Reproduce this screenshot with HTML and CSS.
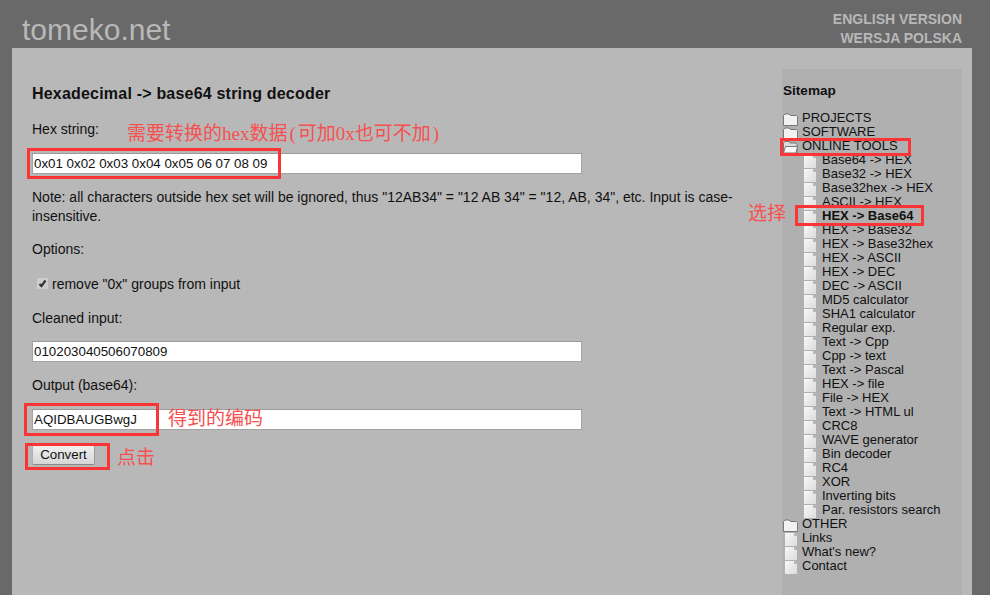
FILE: index.html
```html
<!DOCTYPE html>
<html lang="en">
<head>
    <meta charset="UTF-8">
    <meta name="viewport" content="width=device-width, initial-scale=1.0">
    <title>Hexadecimal -> base64 string decoder</title>
    <link rel="stylesheet" href="styles.css">
</head>
<body>
    <svg class="defs" width="0" height="0">
        <defs>
            <linearGradient id="paper" x1="0" y1="0" x2="1" y2="1">
                <stop offset="0" stop-color="#f8f8f8"/>
                <stop offset="1" stop-color="#dcdcdc"/>
            </linearGradient>
        </defs>
        <symbol id="folder" viewBox="0 0 15 13">
            <path d="M.5 12.500V2.500L2 1H6L7.500 2.500H13.500L14.500 3.500V12.500Z" fill="#f2f2f2" stroke="#777"/>
        </symbol>
        <symbol id="folder-open" viewBox="0 0 15 13">
            <path d="M.5 12V2L2 .5H6L7 2H13L14 3.500V12Z" fill="#dcdcdc" stroke="#777"/>
            <path d="M.5 12L2.500 5.500H14.500L13 12Z" fill="#fafafa" stroke="#777"/>
        </symbol>
        <symbol id="file" viewBox="0 0 12 13">
            <path d="M0 0H9L12 3V13H0Z" fill="url(#paper)"/>
            <path d="M9 0V3H12Z" fill="#b4b4b4"/>
        </symbol>
    </svg>

    <div class="header">
        <div class="logo">tomeko.net</div>
        <div class="lang">
            <a>ENGLISH VERSION</a>
            <a>WERSJA POLSKA</a>
        </div>
    </div>

    <div class="panel">
        <div class="content">
            <h1>Hexadecimal -&gt; base64 string decoder</h1>
            <p class="label">Hex string:</p>
            <input class="field" type="text" value="0x01 0x02 0x03 0x04 0x05 06 07 08 09">
            <p class="note">Note: all characters outside hex set will be ignored, thus "12AB34" = "12 AB 34" = "12, AB, 34", etc. Input is case-insensitive.</p>
            <p class="label options">Options:</p>
            <div class="check">
                <svg class="tick" viewBox="0 0 11 11">
                    <rect width="11" height="11" rx="1" fill="#cdcdcd"/>
                    <path d="M2.500 6L4.500 8L8.500 2.500" fill="none" stroke="#333" stroke-width="2.200"/>
                </svg>
                remove "0x" groups from input
            </div>
            <p class="label cleaned">Cleaned input:</p>
            <input class="field" type="text" value="010203040506070809">
            <p class="label output">Output (base64):</p>
            <input class="field" type="text" value="AQIDBAUGBwgJ">
            <button class="convert">Convert</button>
        </div>

        <div class="sitemap">
            <h2>Sitemap</h2>
            <ul class="tree">
                <li><svg class="ico-folder"><use href="#folder"/></svg>PROJECTS</li>
                <li><svg class="ico-folder"><use href="#folder"/></svg>SOFTWARE</li>
                <li><svg class="ico-folder"><use href="#folder-open"/></svg>ONLINE TOOLS</li>
                <li class="sub"><svg class="ico-file"><use href="#file"/></svg>Base64 -&gt; HEX</li>
                <li class="sub"><svg class="ico-file"><use href="#file"/></svg>Base32 -&gt; HEX</li>
                <li class="sub"><svg class="ico-file"><use href="#file"/></svg>Base32hex -&gt; HEX</li>
                <li class="sub"><svg class="ico-file"><use href="#file"/></svg>ASCII -&gt; HEX</li>
                <li class="sub current"><svg class="ico-file"><use href="#file"/></svg>HEX -&gt; Base64</li>
                <li class="sub"><svg class="ico-file"><use href="#file"/></svg>HEX -&gt; Base32</li>
                <li class="sub"><svg class="ico-file"><use href="#file"/></svg>HEX -&gt; Base32hex</li>
                <li class="sub"><svg class="ico-file"><use href="#file"/></svg>HEX -&gt; ASCII</li>
                <li class="sub"><svg class="ico-file"><use href="#file"/></svg>HEX -&gt; DEC</li>
                <li class="sub"><svg class="ico-file"><use href="#file"/></svg>DEC -&gt; ASCII</li>
                <li class="sub"><svg class="ico-file"><use href="#file"/></svg>MD5 calculator</li>
                <li class="sub"><svg class="ico-file"><use href="#file"/></svg>SHA1 calculator</li>
                <li class="sub"><svg class="ico-file"><use href="#file"/></svg>Regular exp.</li>
                <li class="sub"><svg class="ico-file"><use href="#file"/></svg>Text -&gt; Cpp</li>
                <li class="sub"><svg class="ico-file"><use href="#file"/></svg>Cpp -&gt; text</li>
                <li class="sub"><svg class="ico-file"><use href="#file"/></svg>Text -&gt; Pascal</li>
                <li class="sub"><svg class="ico-file"><use href="#file"/></svg>HEX -&gt; file</li>
                <li class="sub"><svg class="ico-file"><use href="#file"/></svg>File -&gt; HEX</li>
                <li class="sub"><svg class="ico-file"><use href="#file"/></svg>Text -&gt; HTML ul</li>
                <li class="sub"><svg class="ico-file"><use href="#file"/></svg>CRC8</li>
                <li class="sub"><svg class="ico-file"><use href="#file"/></svg>WAVE generator</li>
                <li class="sub"><svg class="ico-file"><use href="#file"/></svg>Bin decoder</li>
                <li class="sub"><svg class="ico-file"><use href="#file"/></svg>RC4</li>
                <li class="sub"><svg class="ico-file"><use href="#file"/></svg>XOR</li>
                <li class="sub"><svg class="ico-file"><use href="#file"/></svg>Inverting bits</li>
                <li class="sub"><svg class="ico-file"><use href="#file"/></svg>Par. resistors search</li>
                <li><svg class="ico-folder"><use href="#folder"/></svg>OTHER</li>
                <li><svg class="ico-page"><use href="#file"/></svg>Links</li>
                <li><svg class="ico-page"><use href="#file"/></svg>What's new?</li>
                <li><svg class="ico-page"><use href="#file"/></svg>Contact</li>
            </ul>
        </div>
    </div>

    <!-- red notes drawn over the screenshot -->
    <div class="box box-hex"></div>
    <div class="box box-tools"></div>
    <div class="box box-current"></div>
    <div class="box box-output"></div>
    <div class="box box-convert"></div>
    <div class="memo memo-hex">需要转换的hex数据<span class="paren">(</span>可加0x也可不加<span class="paren">)</span></div>
    <div class="memo memo-select">选择</div>
    <div class="memo memo-output">得到的编码</div>
    <div class="memo memo-convert">点击</div>
</body>
</html>
```

FILE: styles.css
```css
html, body {
    height: 100%;
    overflow: hidden;
}
body {
    position: relative;
    margin: 0;
    background: #696969;
    font-family: "Liberation Sans", Arial, sans-serif;
    font-size: 14px;
    color: #111;
    display: flex;
    flex-direction: column;
}
.defs {
    position: absolute;
}
.header {
    height: 48px;
    display: flex;
    justify-content: space-between;
    padding: 0 28px 0 22px;
}
.logo {
    font-size: 30px;
    line-height: 34px;
    padding-top: 13px;
    color: #b8b8b8;
}
.lang {
    padding-top: 10px;
    text-align: right;
    font-weight: bold;
    line-height: 19px;
    color: #b8b8b8;
}
.lang a {
    display: block;
}
.panel {
    flex: 1;
    margin: 0 18px 0 12px;
    padding: 21px 10px 0 20px;
    background: #b8b8b8;
    display: flex;
    justify-content: space-between;
}
.content {
    width: 710px;
    padding-top: 16px;
}
h1 {
    margin: 0;
    font-size: 16px;
    line-height: 18px;
    letter-spacing: .2px;
}
p {
    margin: 0;
}
.label {
    line-height: 16px;
    margin-top: 18px;
    margin-bottom: 16px;
}
.field {
    display: block;
    box-sizing: border-box;
    width: 550px;
    height: 21px;
    margin: 0;
    padding: 0 1px;
    border: 1px solid #a4a4a4;
    border-top-color: #9a9a9a;
    background: #fff;
    font-family: "Liberation Sans", Arial, sans-serif;
    font-size: 13.330px;
    color: #111;
}
.note {
    margin-top: 14px;
    line-height: 19px;
}
.options {
    margin-top: 15px;
}
.check {
    display: flex;
    align-items: center;
    gap: 4px;
    margin-left: 5px;
    line-height: 16px;
    margin-top: 19px;
}
.tick {
    width: 11px;
    height: 11px;
    flex: none;
    margin-top: -2px;
}
.cleaned {
    margin-top: 18px;
    margin-bottom: 15px;
}
.output {
    margin-top: 15px;
    margin-bottom: 16px;
}
.convert {
    display: block;
    box-sizing: border-box;
    width: 63px;
    height: 20px;
    margin: 15px 0 0;
    padding: 0 0 1px;
    border: 1px solid #b0b0b0;
    border-bottom-color: #8a8a8a;
    border-right-color: #9a9a9a;
    border-radius: 2px;
    background: linear-gradient(#f0f0f0, #d6d6d6);
    font-family: "Liberation Sans", Arial, sans-serif;
    font-size: 13.330px;
    color: #111;
}
.sitemap {
    width: 179px;
    background: #b0b0b0;
    padding-left: 1px;
}
h2 {
    margin: 14px 0 11px;
    font-size: 13.600px;
    line-height: 16px;
}
.tree {
    list-style: none;
    margin: 0;
    padding: 0;
    font-size: 13px;
}
.tree li {
    display: flex;
    align-items: center;
    height: 14px;
    white-space: nowrap;
}
.tree .sub {
    padding-left: 21px;
}
.tree .current {
    font-weight: bold;
}
.tree svg {
    flex: none;
    overflow: visible;
    transform: translateY(2px);
}
.ico-folder {
    width: 15px;
    height: 13px;
    margin-right: 4px;
}
.ico-file {
    width: 12px;
    height: 13px;
    margin-right: 6px;
}
.ico-page {
    width: 12px;
    height: 13px;
    margin: 0 5px 0 2px;
}
.box {
    position: absolute;
    box-sizing: border-box;
    border: 3px solid #fb3535;
}
.box-hex {
    left: 27px;
    top: 148px;
    width: 254px;
    height: 31px;
}
.box-tools {
    left: 780px;
    top: 138px;
    width: 131px;
    height: 18px;
}
.box-current {
    left: 795px;
    top: 205px;
    width: 129px;
    height: 21px;
}
.box-output {
    left: 24px;
    top: 403px;
    width: 135px;
    height: 33px;
}
.box-convert {
    left: 25px;
    top: 443px;
    width: 85px;
    height: 27px;
}
.memo {
    position: absolute;
    font-family: "Liberation Serif", "Noto Sans CJK SC", serif;
    font-size: 19px;
    line-height: 22px;
    color: #f65050;
    white-space: nowrap;
}
.paren {
    margin: 0 2px;
}
.memo-hex {
    left: 127px;
    top: 123px;
}
.memo-select {
    left: 748px;
    top: 203px;
}
.memo-output {
    left: 168px;
    top: 408px;
}
.memo-convert {
    left: 117px;
    top: 447px;
}
```
